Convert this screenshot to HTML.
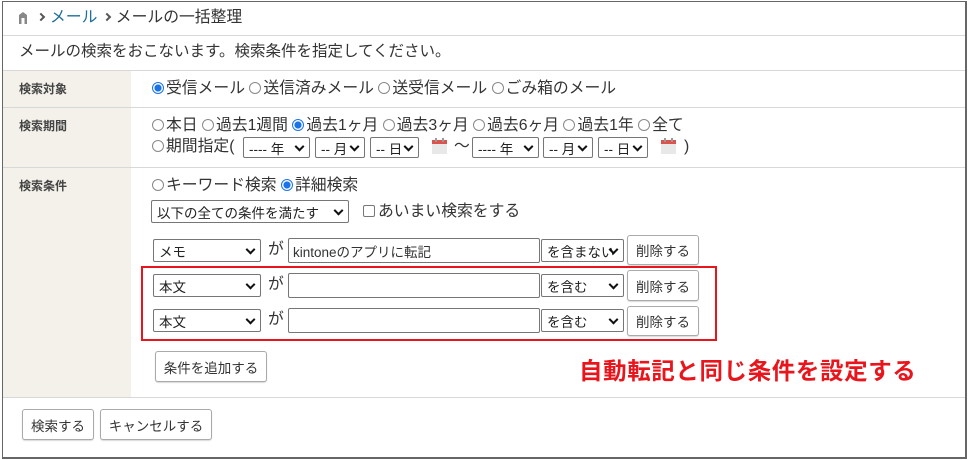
<!DOCTYPE html>
<html><head><meta charset="utf-8"><style>
*{box-sizing:border-box;margin:0;padding:0}
body{width:968px;height:460px;background:#fff;font-family:"Liberation Sans","Noto Sans CJK JP",sans-serif;color:#333;position:relative;overflow:hidden}
.a{position:absolute;white-space:nowrap}
.box{position:absolute;left:2px;top:1px;width:965px;height:458px;border:1px solid #666;border-width:1px 2px 2px 1px}
.hl{position:absolute;left:3px;right:3px;height:1px;background:#d8d8d8}
.lab{position:absolute;left:3px;width:128px;background:#f3f1ea}
.lt{font-size:12px;font-weight:bold;color:#444}
.t{font-size:15.8px;color:#333;line-height:19px}
.r{display:inline-block;width:12px;height:12px;border:1px solid #888;border-radius:50%;vertical-align:-1px;margin-right:2px;background:#fff}
.r.on{border-color:#1a73e8;background:radial-gradient(circle,#1a73e8 0 3.3px,#fff 3.8px)}
.sel{position:absolute;border:1px solid #767676;border-radius:2px;background:#fff;font-size:13.5px;color:#222;padding-left:5px;display:flex;align-items:center}
.sel::after{content:"";position:absolute;right:6px;top:50%;width:5px;height:5px;border-right:2px solid #111;border-bottom:2px solid #111;transform:translateY(-70%) rotate(45deg)}
.inp{position:absolute;border:1px solid #767676;border-radius:2px;background:#fff;font-size:13.5px;padding-left:4px;display:flex;align-items:center}
.btn{position:absolute;border:1px solid #aaa;border-radius:3px;background:#fff;font-size:13.5px;color:#333;display:flex;align-items:center;justify-content:center;box-shadow:0 1px 1px rgba(0,0,0,.15)}
.cal{position:absolute;width:15px;height:16px}
.ch{display:inline-block;width:6px;height:6px;border-right:2px solid #555;border-top:2px solid #555;transform:rotate(45deg);vertical-align:2px;margin:0 6px 0 2px}
</style></head><body>
<div class="box"></div>
<svg class="a" style="left:18px;top:11px" width="10" height="13" viewBox="0 0 10 13"><path d="M1 13V4L5 1L9 4V13H6.5V7H3.5V13Z" fill="#888"/></svg>
<div class="a t" style="left:36px;top:8px"><span class="ch"></span><span style="color:#1f6e9a">メール</span> <span class="ch"></span>メールの一括整理</div>
<div class="hl" style="top:35px"></div>
<div class="a t" style="left:19px;top:42px;font-size:15.5px">メールの検索をおこないます。検索条件を指定してください。</div>
<div class="hl" style="top:70px"></div>
<div class="lab" style="top:71px;height:326px"></div>
<div class="hl" style="top:107px"></div>
<div class="hl" style="top:167px"></div>
<div class="hl" style="top:397px"></div>
<div class="a lt" style="left:19px;top:80px">検索対象</div>
<div class="a lt" style="left:19px;top:117px">検索期間</div>
<div class="a lt" style="left:19px;top:177px">検索条件</div>

<div class="a t" style="left:152px;top:79px"><span class="r on"></span>受信メール <span class="r"></span>送信済みメール <span class="r"></span>送受信メール <span class="r"></span>ごみ箱のメール</div>
<div class="a t" style="left:152px;top:116px"><span class="r"></span>本日 <span class="r"></span>過去1週間 <span class="r on"></span>過去1ヶ月 <span class="r"></span>過去3ヶ月 <span class="r"></span>過去6ヶ月 <span class="r"></span>過去1年 <span class="r"></span>全て</div>
<div class="a t" style="left:152px;top:137px"><span class="r"></span>期間指定(</div>
<div class="sel" style="left:243px;top:137px;width:67px;height:21px">---- 年</div>
<div class="sel" style="left:315px;top:137px;width:50px;height:21px">-- 月</div>
<div class="sel" style="left:370px;top:137px;width:49px;height:21px">-- 日</div>
<svg class="cal" style="left:432px;top:138px" viewBox="0 0 15 16"><rect x="0" y="2" width="15" height="14" fill="#e8e8e8"/><rect x="0" y="2" width="15" height="4" fill="#d9534f"/><rect x="3" y="0" width="2" height="4" fill="#999"/><rect x="10" y="0" width="2" height="4" fill="#999"/></svg>
<div class="a t" style="left:454px;top:137px">〜</div>
<div class="sel" style="left:472px;top:137px;width:67px;height:21px">---- 年</div>
<div class="sel" style="left:543px;top:137px;width:50px;height:21px">-- 月</div>
<div class="sel" style="left:598px;top:137px;width:50px;height:21px">-- 日</div>
<svg class="cal" style="left:661px;top:138px" viewBox="0 0 15 16"><rect x="0" y="2" width="15" height="14" fill="#e8e8e8"/><rect x="0" y="2" width="15" height="4" fill="#d9534f"/><rect x="3" y="0" width="2" height="4" fill="#999"/><rect x="10" y="0" width="2" height="4" fill="#999"/></svg>
<div class="a t" style="left:684px;top:137px">)</div>

<div class="a t" style="left:152px;top:176px"><span class="r"></span>キーワード検索 <span class="r on"></span>詳細検索</div>
<div class="sel" style="left:151px;top:200px;width:198px;height:23px">以下の全ての条件を満たす</div>
<div class="a t" style="left:363px;top:202px"><span style="display:inline-block;width:12px;height:12px;border:1px solid #777;border-radius:2px;vertical-align:-1px;margin-right:3px"></span>あいまい検索をする</div>

<div class="sel" style="left:153px;top:239px;width:108px;height:23px">メモ</div>
<div class="a t" style="left:268px;top:240px">が</div>
<div class="inp" style="left:288px;top:238px;width:252px;height:25px">kintoneのアプリに転記</div>
<div class="sel" style="left:541px;top:239px;width:83px;height:23px">を含まない</div>
<div class="btn" style="left:627px;top:235px;width:72px;height:30px">削除する</div>

<div class="sel" style="left:153px;top:274px;width:108px;height:23px">本文</div>
<div class="a t" style="left:268px;top:275px">が</div>
<div class="inp" style="left:288px;top:273px;width:252px;height:25px"></div>
<div class="sel" style="left:541px;top:274px;width:83px;height:23px">を含む</div>
<div class="btn" style="left:627px;top:270px;width:72px;height:31px">削除する</div>

<div class="sel" style="left:153px;top:309px;width:108px;height:23px">本文</div>
<div class="a t" style="left:268px;top:310px">が</div>
<div class="inp" style="left:288px;top:308px;width:252px;height:25px"></div>
<div class="sel" style="left:541px;top:309px;width:83px;height:23px">を含む</div>
<div class="btn" style="left:627px;top:306px;width:72px;height:30px">削除する</div>

<div class="a" style="left:141px;top:266px;width:576px;height:75px;border:2px solid #e8161c"></div>

<div class="btn" style="left:155px;top:351px;width:112px;height:31px">条件を追加する</div>
<div class="a" style="left:579px;top:352px;font-size:23.5px;font-weight:bold;color:#e8161c;letter-spacing:0.6px">自動転記と同じ条件を設定する</div>

<div class="btn" style="left:22px;top:409px;width:72px;height:31px">検索する</div>
<div class="btn" style="left:100px;top:409px;width:112px;height:31px">キャンセルする</div>
</body></html>
